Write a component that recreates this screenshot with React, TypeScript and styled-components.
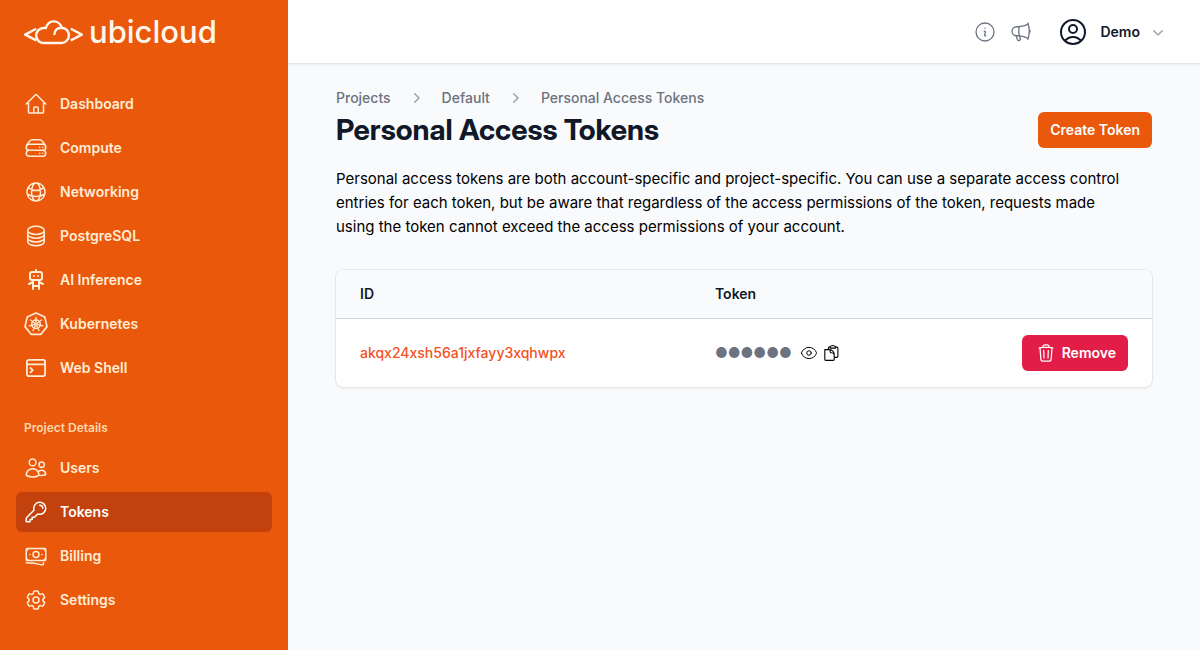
import React from "react";
import styled, { createGlobalStyle } from "styled-components";
import {
  HiOutlineHome,
  HiOutlineServerStack,
  HiOutlineGlobeAlt,
  HiOutlineCircleStack,
  HiOutlineUsers,
  HiOutlineKey,
  HiOutlineBanknotes,
  HiOutlineCog6Tooth,
  HiOutlineInformationCircle,
  HiOutlineMegaphone,
  HiOutlineUserCircle,
  HiOutlineEye,
  HiOutlineTrash,
  HiMiniChevronDown,
  HiMiniChevronRight,
} from "react-icons/hi2";
import { TbRobot } from "react-icons/tb";

const GlobalStyle = createGlobalStyle`
  *, *::before, *::after { box-sizing: border-box; }
  body {
    margin: 0;
    background: #f9fafb;
    color: #000;
    font-family: Inter, "Liberation Sans", sans-serif;
    font-size: 15px;
    line-height: 24px;
  }
  h1, h2, p, ul, ol { margin: 0; padding: 0; }
  ul, ol { list-style: none; }
  a { color: inherit; text-decoration: none; }
  button { font: inherit; border: 0; cursor: pointer; }
  svg { display: block; flex: none; }
`;

const Shell = styled.div`
  display: grid;
  grid-template-columns: 288px minmax(0, 1fr);
  min-height: 100vh;
`;

const Sidebar = styled.aside`
  display: flex;
  flex-direction: column;
  background: #ea580c;
  padding: 0 16px 24px;
`;

const Brand = styled.a`
  display: flex;
  align-items: center;
  gap: 5px;
  height: 64px;
  padding: 0 8px;
  margin-bottom: 20px;
  color: #fff7ed;
`;

const BrandName = styled.span`
  font-size: 31px;
  line-height: 32px;
  font-weight: 500;
`;

const NavList = styled.ul`
  display: flex;
  flex-direction: column;
  gap: 4px;
`;

const NavHeading = styled.h2`
  margin: 28px 0 8px;
  padding: 0 8px;
  color: #fed7aa;
  font-size: 12px;
  line-height: 24px;
  font-weight: 600;
`;

const NavLink = styled.a<{ $active?: boolean }>`
  display: flex;
  align-items: center;
  gap: 12px;
  padding: 8px;
  border-radius: 6px;
  background: ${(p) => (p.$active ? "#c2410c" : "transparent")};
  color: ${(p) => (p.$active ? "#fff" : "#ffedd5")};
  font-size: 14px;
  line-height: 24px;
  font-weight: 600;
`;

const Column = styled.div`
  display: flex;
  flex-direction: column;
`;

const TopBar = styled.header`
  display: flex;
  align-items: center;
  justify-content: flex-end;
  gap: 24px;
  height: 64px;
  padding: 0 32px;
  background: #fff;
  border-bottom: 1px solid #e5e7eb;
  box-shadow: 0 1px 2px rgba(0, 0, 0, 0.05);
`;

const TopLinks = styled.div`
  display: flex;
  gap: 12px;
  color: #6b7280;
`;

const AccountButton = styled.button`
  display: flex;
  align-items: center;
  padding: 0;
  background: none;
  color: #111827;
  font-size: 14px;
  line-height: 24px;
  font-weight: 600;
`;

const AccountName = styled.span`
  margin: 0 8px 0 11px;
`;

const Main = styled.main`
  padding: 24px 48px;
`;

const Crumbs = styled.ol`
  display: flex;
  align-items: center;
  gap: 15px;
  color: #6b7280;
  font-size: 14px;
  line-height: 20px;
  font-weight: 500;
`;

const Crumb = styled.li`
  display: flex;
  align-items: center;
  gap: 16px;
`;

const TitleRow = styled.div`
  display: flex;
  align-items: center;
  justify-content: space-between;
  margin-top: 4px;
`;

const Title = styled.h1`
  color: #111827;
  font-family: "Inter Display", Inter, sans-serif;
  font-size: 29px;
  line-height: 36px;
  font-weight: 700;
`;

const Button = styled.button<{ $danger?: boolean }>`
  display: inline-flex;
  align-items: center;
  gap: 6px;
  height: 36px;
  padding: ${(p) => (p.$danger ? "0 12px 0 14px" : "0 12px")};
  border-radius: 6px;
  background: ${(p) => (p.$danger ? "#e11d48" : "#ea580c")};
  color: #fff;
  font-size: 14px;
  line-height: 20px;
  font-weight: 600;
`;

const Intro = styled.p`
  margin: 19px 0 31px;
  padding-right: 20px;
`;

const Card = styled.div`
  overflow: hidden;
  border-radius: 8px;
  background: #fff;
  box-shadow: 0 0 0 1px #e5e7eb, 0 1px 3px rgba(0, 0, 0, 0.1);
`;

const Table = styled.table`
  width: 100%;
  border-collapse: collapse;
  font-size: 14px;
  line-height: 20px;
`;

const HeadCell = styled.th<{ $width?: string }>`
  width: ${(p) => p.$width ?? "auto"};
  padding: 14px 24px;
  background: #f9fafb;
  border-bottom: 1px solid #d1d5db;
  color: #111827;
  text-align: left;
  font-weight: 600;
`;

const Cell = styled.td<{ $end?: boolean }>`
  padding: 16px 24px;
  text-align: ${(p) => (p.$end ? "right" : "left")};
  font-weight: 500;
`;

const TokenLink = styled.a`
  color: #f4511e;
`;

const Secret = styled.div`
  display: flex;
  align-items: center;
  gap: 4px;
`;

const Mask = styled.span`
  margin-right: 3px;
  color: #6b7280;
  font-weight: 400;
`;

const IconButton = styled.button`
  padding: 1px;
  background: none;
  color: #000;
`;

function CloudMark() {
  return (
    <svg width="60" height="26" viewBox="0 0 60 26" fill="none" stroke="currentColor" strokeWidth="2.4" strokeLinejoin="round" aria-hidden="true">
      <path d="M12.200 9.800 1.200 15.600l11 5.800M46.800 9.800 57.800 15.600l-11 5.800" />
      <path d="M20.3 24a7.400 7.400 0 0 1-1.200-15c1-.2 2-.2 2.700 0C23.300 4.600 26.400 2.400 29.500 2.400c4 0 7.300 2.500 8.100 6.300 4.400.3 7.300 3.600 7.300 7.500 0 4.300-3.300 7.800-7.600 7.800ZM30.300 16c0-4.500 2.800-7.300 7.300-7.300" />
    </svg>
  );
}

function WheelIcon() {
  const spokes = Array.from({ length: 7 }, (_, i) => (i * 360) / 7);
  return (
    <svg width="24" height="24" viewBox="0 0 24 24" fill="none" stroke="currentColor" strokeWidth="1.700" strokeLinejoin="round" aria-hidden="true">
      <path d="m12 .9 8.800 4.200 2.200 9.500-6.100 7.700H7.100L1 14.600l2.200-9.500Z" />
      <circle cx="12" cy="12.300" r="4.300" strokeWidth="1.500" />
      {spokes.map((a) => (
        <path key={a} d="M12 11V5.200" strokeWidth="1.200" strokeLinecap="round" transform={`rotate(${a} 12 12.300)`} />
      ))}
      <circle cx="12" cy="12.300" r="1" strokeWidth="1" />
    </svg>
  );
}

function ShellIcon() {
  return (
    <svg width="24" height="24" viewBox="0 0 24 24" fill="none" stroke="currentColor" strokeWidth="1.800" strokeLinecap="round" strokeLinejoin="round" aria-hidden="true">
      <rect x="2.900" y="3.900" width="18.200" height="16.200" rx="2" />
      <path d="M3 8.300h18M6.500 12l2.300 2.200-2.300 2.200" />
    </svg>
  );
}

function CopyIcon() {
  return (
    <svg width="16" height="16" viewBox="0 0 16 16" fill="none" stroke="currentColor" strokeWidth="1.100" strokeLinejoin="round" aria-hidden="true">
      <path d="M.8 4.600h4.800c2.300 0 4.600 2.300 4.600 4.600v5.300c0 .6-.3.900-.9.900H1.700c-.6 0-.9-.3-.9-.9ZM5.400 4.600c.9.500.8 1.200.8 2.300 0 .6.300.9.900.9 1.300 0 2.300 0 3.100 1.400" />
      <path d="M4.400 4.500V3.200c0-.8.500-1.200 1.700-1.300M11.400 1.900c1.600.1 2.500.5 2.500 1.500v7.800c0 .8-.5 1.200-1.200 1.200h-2.400" />
      <path d="M6.100 3.100V2.200C6.100 1.300 6.900.7 7.800.7h1.900c1 0 1.700.6 1.700 1.500v.9Z" />
    </svg>
  );
}

const mainNav = [
  { label: "Dashboard", icon: <HiOutlineHome size={24} /> },
  { label: "Compute", icon: <HiOutlineServerStack size={24} /> },
  { label: "Networking", icon: <HiOutlineGlobeAlt size={24} /> },
  { label: "PostgreSQL", icon: <HiOutlineCircleStack size={24} /> },
  { label: "AI Inference", icon: <TbRobot size={24} /> },
  { label: "Kubernetes", icon: <WheelIcon /> },
  { label: "Web Shell", icon: <ShellIcon /> },
];

const projectNav = [
  { label: "Users", icon: <HiOutlineUsers size={24} /> },
  { label: "Tokens", icon: <HiOutlineKey size={24} />, active: true },
  { label: "Billing", icon: <HiOutlineBanknotes size={24} /> },
  { label: "Settings", icon: <HiOutlineCog6Tooth size={24} /> },
];

const crumbs = ["Projects", "Default", "Personal Access Tokens"];

type NavItem = { label: string; icon: React.ReactNode; active?: boolean };

function Nav({ items }: { items: NavItem[] }) {
  return (
    <NavList>
      {items.map((item) => (
        <li key={item.label}>
          <NavLink href="#" $active={item.active} aria-current={item.active ? "page" : undefined}>
            {item.icon}
            {item.label}
          </NavLink>
        </li>
      ))}
    </NavList>
  );
}

export default function App() {
  return (
    <>
      <GlobalStyle />
      <Shell>
        <Sidebar>
          <Brand href="#">
            <CloudMark />
            <BrandName>ubicloud</BrandName>
          </Brand>
          <nav>
            <Nav items={mainNav} />
            <NavHeading>Project Details</NavHeading>
            <Nav items={projectNav} />
          </nav>
        </Sidebar>
        <Column>
          <TopBar>
            <TopLinks>
              <a href="#" aria-label="Information"><HiOutlineInformationCircle size={24} strokeWidth={1.3} /></a>
              <a href="#" aria-label="Announcements"><HiOutlineMegaphone size={24} strokeWidth={1.3} /></a>
            </TopLinks>
            <AccountButton type="button">
              <HiOutlineUserCircle size={32} />
              <AccountName>Demo</AccountName>
              <HiMiniChevronDown size={20} color="#9ca3af" />
            </AccountButton>
          </TopBar>
          <Main>
            <Crumbs>
              {crumbs.map((c, i) => (
                <Crumb key={c}>
                  {i > 0 && <HiMiniChevronRight size={20} color="#9ca3af" />}
                  <a href="#">{c}</a>
                </Crumb>
              ))}
            </Crumbs>
            <TitleRow>
              <Title>Personal Access Tokens</Title>
              <Button type="button">Create Token</Button>
            </TitleRow>
            <Intro>
              Personal access tokens are both account-specific and project-specific. You can use a separate access
              control entries for each token, but be aware that regardless of the access permissions of the token,
              requests made using the token cannot exceed the access permissions of your account.
            </Intro>
            <Card>
              <Table>
                <thead>
                  <tr>
                    <HeadCell scope="col" $width="43.5%">ID</HeadCell>
                    <HeadCell scope="col">Token</HeadCell>
                    <HeadCell as="td" />
                  </tr>
                </thead>
                <tbody>
                  <tr>
                    <Cell><TokenLink href="#">akqx24xsh56a1jxfayy3xqhwpx</TokenLink></Cell>
                    <Cell>
                      <Secret>
                        <Mask>●●●●●●</Mask>
                        <IconButton type="button" aria-label="Show token"><HiOutlineEye size={18} strokeWidth={1.3} /></IconButton>
                        <IconButton type="button" aria-label="Copy token"><CopyIcon /></IconButton>
                      </Secret>
                    </Cell>
                    <Cell $end>
                      <Button type="button" $danger>
                        <HiOutlineTrash size={20} />
                        Remove
                      </Button>
                    </Cell>
                  </tr>
                </tbody>
              </Table>
            </Card>
          </Main>
        </Column>
      </Shell>
    </>
  );
}
